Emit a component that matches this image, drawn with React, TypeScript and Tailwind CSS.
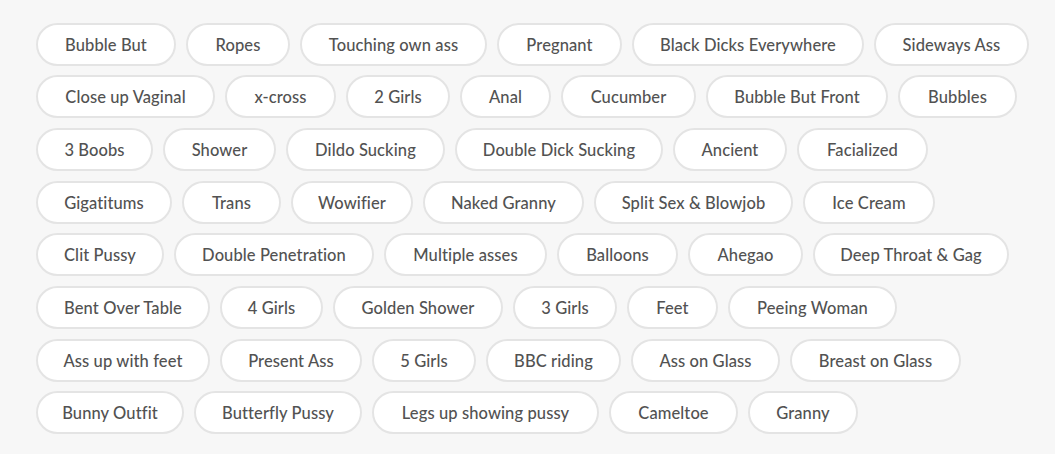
const rows: [string, number][][] = [
  [["Bubble But", 140], ["Ropes", 104], ["Touching own ass", 187], ["Pregnant", 125], ["Black Dicks Everywhere", 232], ["Sideways Ass", 155]],
  [["Close up Vaginal", 179], ["x-cross", 111], ["2 Girls", 104], ["Anal", 91], ["Cucumber", 135], ["Bubble But Front", 182], ["Bubbles", 119]],
  [["3 Boobs", 117], ["Shower", 113], ["Dildo Sucking", 159], ["Double Dick Sucking", 208], ["Ancient", 114], ["Facialized", 131]],
  [["Gigatitums", 136], ["Trans", 99], ["Wowifier", 122], ["Naked Granny", 161], ["Split Sex & Blowjob", 199], ["Ice Cream", 132]],
  [["Clit Pussy", 128], ["Double Penetration", 200], ["Multiple asses", 163], ["Balloons", 121], ["Ahegao", 115], ["Deep Throat & Gag", 196]],
  [["Bent Over Table", 174], ["4 Girls", 103], ["Golden Shower", 170], ["3 Girls", 104], ["Feet", 91], ["Peeing Woman", 169]],
  [["Ass up with feet", 174], ["Present Ass", 142], ["5 Girls", 104], ["BBC riding", 135], ["Ass on Glass", 149], ["Breast on Glass", 171]],
  [["Bunny Outfit", 148], ["Butterfly Pussy", 168], ["Legs up showing pussy", 227], ["Cameltoe", 129], ["Granny", 110]],
];

const App = () => {
  return (
    <div className="min-h-screen w-full bg-[#f7f7f7] pt-[22.5px] pl-[36px] font-['Lato','Open_Sans',sans-serif]">
      <div className="flex flex-col gap-y-[9.7px]">
        {rows.map((row, i) => (
          <div key={i} className="flex gap-[10px]">
            {row.map(([label, w]) => (
              <a
                key={label}
                href="#"
                style={{ width: w }}
                className="flex h-[43px] shrink-0 items-center justify-center rounded-full border-2 border-[#e4e4e4] bg-white pt-[2px] text-[16.5px] font-medium tracking-[0.1px] text-[#525252] whitespace-nowrap"
              >
                {label}
              </a>
            ))}
          </div>
        ))}
      </div>
    </div>
  );
};

export default App;
